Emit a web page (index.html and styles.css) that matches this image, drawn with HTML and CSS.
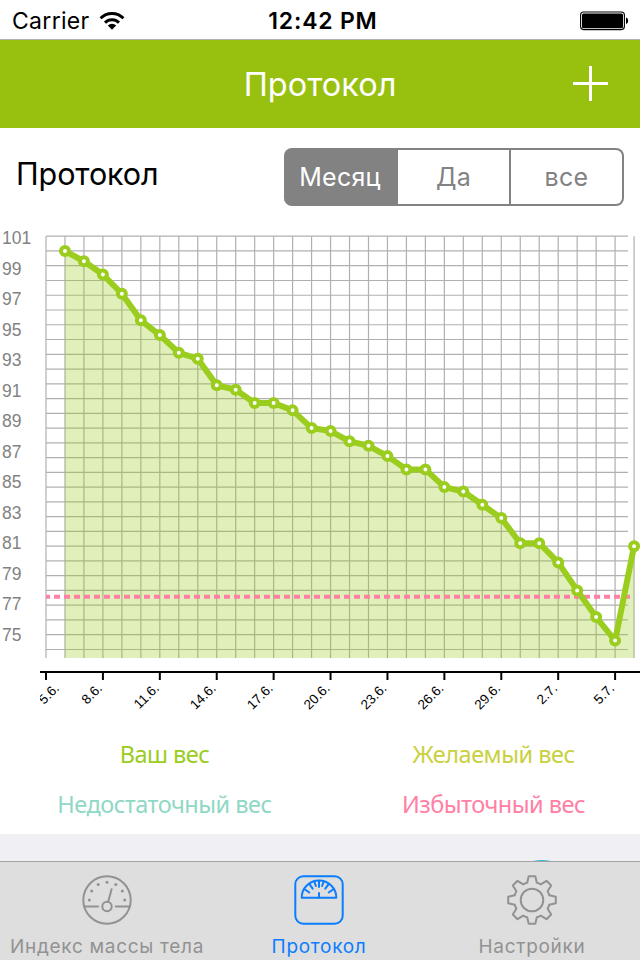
FILE: index.html
```html
<!DOCTYPE html>
<html lang="ru">
<head>
    <meta charset="UTF-8">
    <meta name="viewport" content="width=device-width, initial-scale=1.0">
    <title>Протокол</title>
    <link rel="stylesheet" href="styles.css">
</head>
<body>
    <div class="status-bar">
        <div class="carrier">
            <span>Carrier</span>
            <svg class="wifi" width="26" height="20" viewBox="0 0 26 20">
                <path d="M1.6 7.2a16 16 0 0 1 22.8 0M6 11.6a9.9 9.9 0 0 1 14 0" fill="none" stroke="#000" stroke-width="3"/>
                <path d="M13 18.8l-4.2-4.4a6 6 0 0 1 8.4 0z"/>
            </svg>
        </div>
        <div class="time">12:42 PM</div>
        <svg class="battery" width="49" height="20" viewBox="0 0 49 20">
            <rect x=".6" y="1" width="43.8" height="17.6" rx="3" fill="none" stroke="#000" stroke-width="1.1"/>
            <rect x="2" y="2.4" width="41" height="14.8" rx="1.5"/>
            <path d="M46 6.5q2.2 .6 2.2 3.3t-2.2 3.3z"/>
        </svg>
    </div>

    <header class="navbar">
        <h1>Протокол</h1>
        <svg class="add" width="36" height="36" viewBox="0 0 36 36">
            <path d="M18.5 0v35M1 17.5h35" stroke="#fff" stroke-width="3"/>
        </svg>
    </header>

    <main>
        <div class="toolbar">
            <h2>Протокол</h2>
            <div class="segments">
                <div class="segment active">Месяц</div>
                <div class="segment">Да</div>
                <div class="segment">все</div>
            </div>
        </div>

        <svg id="chart" class="chart" width="640" height="506" viewBox="0 220 640 506">
            <defs>
                <clipPath id="axis-clip"><rect x="40" y="660" width="600" height="66"/></clipPath>
            </defs>
            <g id="grid" class="grid"></g>
            <path id="area" class="area"/>
            <path class="limit" d="M46 596.7H630"/>
            <polyline id="line" class="line"/>
            <g id="points" class="points"></g>
            <g id="values" class="values"></g>
            <path class="axis" d="M40 672H640"/>
            <g id="dates" class="dates" clip-path="url(#axis-clip)"></g>
        </svg>

        <div class="legend">
            <span class="own">Ваш вес</span>
            <span class="wish">Желаемый вес</span>
            <span class="under">Недостаточный вес</span>
            <span class="over">Избыточный вес</span>
        </div>
    </main>

    <div class="next-card">
        <div class="next-circle"></div>
    </div>

    <nav class="tabbar">
        <div class="tab tab-index">
            <svg width="52" height="52" viewBox="-26 -26 52 52">
                <circle r="23.7"/>
                <circle cy="6.5" r="4.7"/>
                <path d="M1.2 1.8L4.6-10.8M-22.7 6.5H-8.8M8.8 6.5H22.7"/>
                <g class="dots">
                    <circle cx="-17.7" cy="0" r="1.5"/>
                    <circle cx="-15.3" cy="-9" r="1.5"/>
                    <circle cx="-8.8" cy="-15.5" r="1.5"/>
                    <circle cx="0" cy="-17.7" r="1.5"/>
                    <circle cx="8.8" cy="-15.5" r="1.5"/>
                    <circle cx="15.3" cy="-9" r="1.5"/>
                    <circle cx="17.7" cy="0" r="1.5"/>
                </g>
            </svg>
            <span>Индекс массы тела</span>
        </div>
        <div class="tab tab-log active">
            <svg width="52" height="52" viewBox="-26 -26 52 52">
                <rect x="-23.7" y="-23.7" width="47.4" height="47.4" rx="8"/>
                <path d="M-17.3-2.3a17.3 17.3 0 0 1 34.6 0z"/>
                <path d="M0-19v6M0-7v4.5M-4.7-18.3l1.6 4.3M4.7-18.3l-1.6 4.3M-9.6-15.9l3.3 4.6M9.6-15.9l-3.3 4.6M-14-10.5l4.3 3M14-10.5l-4.3 3"/>
            </svg>
            <span>Протокол</span>
        </div>
        <div class="tab tab-settings">
            <svg width="52" height="52" viewBox="-26 -26 52 52">
                <circle r="11.3"/>
                <path d="M-4.8-17.2L-3.3-23.8H3.3L4.8-17.2Q6.8-16.8 8.8-15.6L14.5-19.2L19.2-14.5L15.6-8.8Q16.8-6.8 17.2-4.8L23.8-3.3V3.3L17.2 4.8Q16.8 6.8 15.6 8.8L19.2 14.5L14.5 19.2L8.8 15.6Q6.8 16.8 4.8 17.2L3.3 23.8H-3.3L-4.8 17.2Q-6.8 16.8-8.8 15.6L-14.5 19.2L-19.2 14.5L-15.6 8.8Q-16.8 6.8-17.2 4.8L-23.8 3.3V-3.3L-17.2-4.8Q-16.8-6.8-15.6-8.8L-19.2-14.5L-14.5-19.2L-8.8-15.6Q-6.8-16.8-4.8-17.2z"/>
            </svg>
            <span>Настройки</span>
        </div>
    </nav>

    <script src="chart.js"></script>
</body>
</html>
```
FILE: styles.css
```css
* {
    margin: 0;
    padding: 0;
    box-sizing: border-box;
}

body {
    width: 640px;
    height: 960px;
    overflow: hidden;
    display: flex;
    flex-direction: column;
    background: #fff;
    font-family: Inter, "Liberation Sans", sans-serif;
    color: #000;
}

.status-bar {
    height: 40px;
    padding: 2px 11px 0 12px;
    display: grid;
    grid-template-columns: 1fr auto 1fr;
    align-items: center;
    border-bottom: 1px solid #b2b2b2;
    font-size: 23px;
}

.carrier {
    display: flex;
    align-items: center;
    gap: 9px;
    letter-spacing: 0.3px;
}

.time {
    margin-left: 5px;
    font-weight: 600;
    letter-spacing: 0.8px;
}

.battery {
    justify-self: end;
}

.navbar {
    height: 88px;
    padding: 0 32px;
    display: grid;
    grid-template-columns: 1fr auto 1fr;
    align-items: center;
    background: #98c10f;
    color: #fff;
}

.navbar h1 {
    grid-column: 2;
    font-size: 32.5px;
    font-weight: 400;
}

.add {
    justify-self: end;
}

main {
    height: 706px;
}

.toolbar {
    height: 92px;
    padding: 20px 16px 0;
    display: flex;
    justify-content: space-between;
    align-items: flex-start;
}

.toolbar h2 {
    font-size: 30.5px;
    line-height: 52px;
    font-weight: 400;
    letter-spacing: -0.1px;
}

.segments {
    width: 340px;
    height: 58px;
    display: flex;
}

.segment {
    flex: 1;
    line-height: 55px;
    text-align: center;
    font-size: 25px;
    letter-spacing: 0.3px;
    color: #828282;
    border: 2px solid #828282;
    border-left: none;
}

.segment:first-child {
    flex: none;
    width: 114px;
    border-radius: 8px 0 0 8px;
}

.segment:last-child {
    border-radius: 0 8px 8px 0;
}

.segment.active {
    background: #828282;
    color: #fff;
}

.chart {
    display: block;
}

.grid {
    stroke: #b0b0b0;
    stroke-width: 1.2;
}

.area {
    fill: #9acd1e;
    fill-opacity: 0.3;
}

.limit {
    stroke: #ff80a4;
    stroke-width: 4;
    stroke-dasharray: 6 4;
    stroke-dashoffset: 2;
}

.line {
    fill: none;
    stroke: #9acd1e;
    stroke-width: 6;
    stroke-linejoin: round;
}

.points circle {
    fill: #fff;
    stroke: #9acd1e;
    stroke-width: 4;
}

.values {
    font: 17.5px "Liberation Sans", sans-serif;
    fill: #828282;
}

.axis,
.dates path {
    stroke: #000;
    stroke-width: 2;
}

.dates {
    font: 13.5px "Liberation Sans", sans-serif;
    text-anchor: end;
}

.legend {
    padding-top: 3px;
    display: grid;
    grid-template-columns: 329px 329px;
    grid-auto-rows: 50px;
    line-height: 50px;
    text-align: center;
    font-family: "Noto Sans", sans-serif;
    font-size: 23.5px;
    font-weight: 400;
    letter-spacing: -0.5px;
}

.own {
    color: #9acd1e;
}

.wish {
    color: #c9d13e;
}

.under {
    color: #8fd8c4;
}

.over {
    color: #ff80a4;
}

.next-card {
    height: 27px;
    overflow: hidden;
    background: #efeff4;
}

.next-circle {
    width: 80px;
    height: 80px;
    margin: 26px 0 0 502px;
    border-radius: 50%;
    background: #35b5d8;
}

.tabbar {
    height: 99px;
    display: grid;
    grid-template-columns: 214px 210px 216px;
    border-top: 1px solid #a3a3a3;
    background: #dedede;
}

.tab {
    padding-top: 12px;
    display: flex;
    flex-direction: column;
    align-items: center;
    color: #929292;
    font-size: 19px;
    line-height: 42px;
    letter-spacing: 0.7px;
    white-space: nowrap;
}

.tab.active {
    color: #0b7dff;
}

.tab svg {
    flex: none;
    fill: none;
    stroke: currentColor;
    stroke-width: 2;
    stroke-linejoin: round;
    stroke-linecap: round;
}

.tab .dots {
    fill: currentColor;
    stroke: none;
}
```
FILE: chart.js
```js
const weights = [
    100, 99.3, 98.4, 97.1, 95.3, 94.3, 93.1, 92.7, 90.9, 90.6, 89.7, 89.7,
    89.2, 88, 87.8, 87.1, 86.8, 86.1, 85.2, 85.2, 84, 83.7, 82.8, 81.9,
    80.2, 80.2, 78.9, 77, 75.2, 73.6, 80
];
const dates = ['5.6.', '8.6.', '11.6.', '14.6.', '17.6.', '20.6.', '23.6.', '26.6.', '29.6.', '2.7.', '5.7.'];

const chartTop = 236.2;
const chartBottom = 658;
const dayX = day => 46 + day * 18.97;
const weightY = kg => chartTop + (101 - kg) * 14.76;
const byId = id => document.getElementById(id);

let grid = '';
for (let kg = 101; kg >= 73; kg--) {
    grid += `<path d="M46 ${weightY(kg)}H628"/>`;
}
for (let day = 0; day <= 31; day++) {
    grid += `<path d="M${dayX(day)} ${chartTop}V${chartBottom}"/>`;
}
byId('grid').innerHTML = grid;

// first measurement is on the second day
const points = weights.map((kg, i) => [dayX(i + 1), weightY(kg)]);
byId('line').setAttribute('points', points.join(' '));
byId('area').setAttribute('d', `M${dayX(1)} ${chartBottom}L${points.join(' ')}V${chartBottom}z`);
byId('points').innerHTML = points.map(([x, y]) => `<circle cx="${x}" cy="${y}" r="4"/>`).join('');

let values = '';
for (let i = 0; i < 14; i++) {
    values += `<text x="2" y="${244 + i * 30.54}">${101 - i * 2}</text>`;
}
byId('values').innerHTML = values;

byId('dates').innerHTML = dates.map((date, i) => {
    const x = dayX(i * 3);
    // the first label is pushed right so it stays on the axis
    const labelX = i === 0 ? x + 14 : x;
    return `<path d="M${x} 672V680"/><text transform="translate(${labelX} 689) rotate(-45)">${date}</text>`;
}).join('');
```
